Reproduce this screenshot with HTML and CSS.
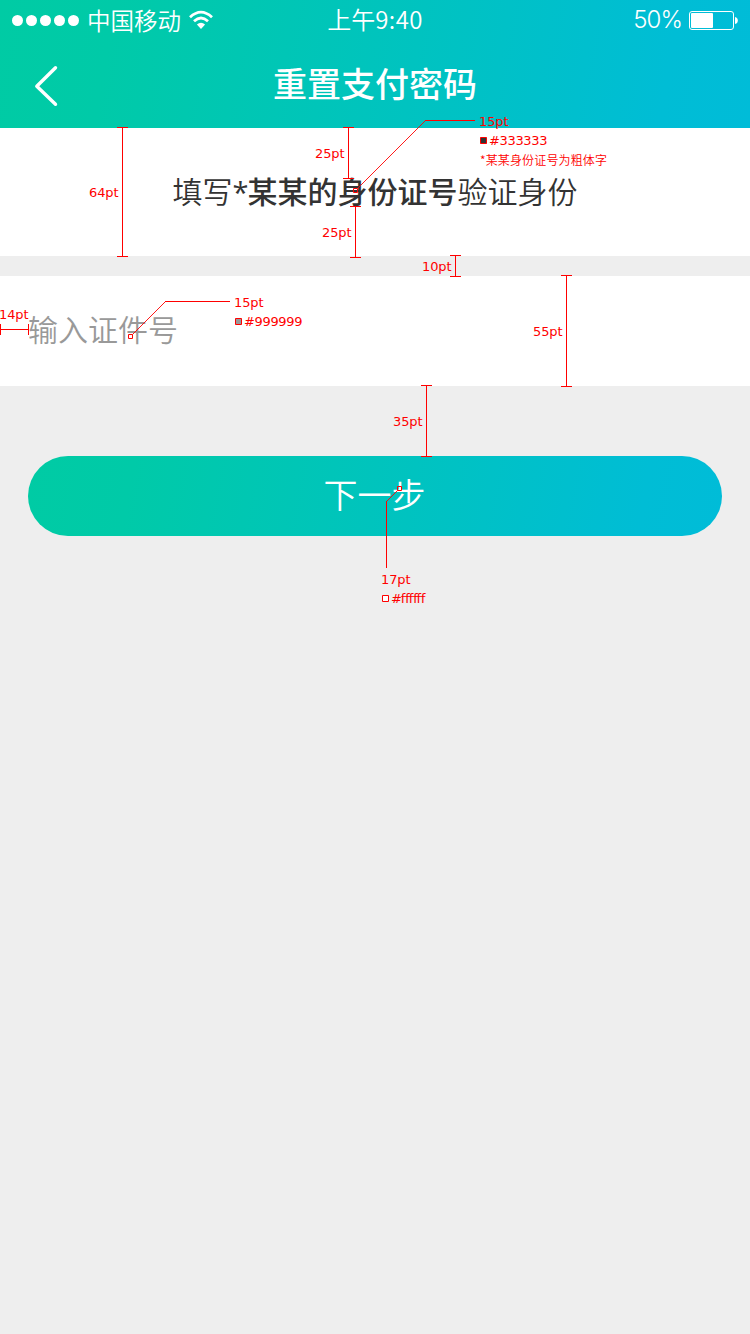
FILE: index.html
```html
<!DOCTYPE html>
<html lang="zh-CN">
<head>
<meta charset="utf-8">
<title>重置支付密码</title>
<link rel="stylesheet" href="styles.css">
</head>
<body>
<main class="screen">
  <header class="header">
    <div class="status">
      <div class="status-left">
        <span class="signal"><i></i><i></i><i></i><i></i><i></i></span>
        <span class="carrier">中国移动</span>
        <svg class="wifi" width="24" height="20" viewBox="0 0 24 20" fill="none" stroke="#fff" stroke-width="2.8">
          <path d="M1 7.2Q12 -3 23 7.2"/>
          <path d="M5 11.2Q12 4.9 19 11.2"/>
          <path d="M7.9 14.4Q12 11 16.1 14.4L12 19Z" fill="#fff" stroke="none"/>
        </svg>
      </div>
      <div class="time">上午<span class="digits">9:40</span></div>
      <div class="status-right">
        <span class="percent">50%</span>
        <svg class="battery" width="49" height="19" viewBox="0 0 49 19">
          <rect x=".5" y=".5" width="44" height="18" rx="2.5" fill="none" stroke="#fff"/>
          <rect x="2" y="2" width="22" height="15" rx="1" fill="#fff"/>
          <path d="M46 6Q48.8 6.5 48.8 9.5T46 13Z" fill="#fff"/>
        </svg>
      </div>
    </div>
    <nav class="nav">
      <svg class="back" width="26" height="42" viewBox="0 0 26 42" fill="none" stroke="#fff" stroke-width="3.4" stroke-linecap="round" stroke-linejoin="round"><path d="M21.5 2.7L2.8 21.3L21.5 39.3"/></svg>
      <h1 class="title">重置支付密码</h1>
    </nav>
  </header>
  <p class="prompt">填写<span class="star">*</span><b>某某的身份证号</b>验证身份</p>
  <div class="field">输入证件号</div>
  <button class="next" type="button">下一步</button>

  <svg class="notes" width="750" height="1334" viewBox="0 0 750 1334">
    <g class="rule">
      <path d="M117 127.5H128M122.5 127V257M117 256.5H128"/>
      <path d="M343 127.5H354M348.5 127V179M343 178.5H354"/>
      <path d="M350 206.5H361M355.5 206V258M350 257.5H361"/>
      <path d="M450 255.5H461M455.5 255V277M450 276.5H461"/>
      <path d="M561 275.5H572M566.5 275V387M561 386.5H572"/>
      <path d="M421 385.5H432M426.5 385V457M421 456.5H432"/>
      <path d="M.5 324V335M0 329.5H29M28.5 324V335"/>
      <path d="M425 120.5H475M165 301.5H230M386.5 501V568"/>
      <path d="M353.5 188.5h4v4h-4zM128.5 334.5h4v4h-4zM397.5 486.5h4v4h-4z"/>
      <path d="M480.5 137.5h6v6h-6z" fill="#333"/>
      <path d="M235.5 318.5h6v6h-6z" fill="#999"/>
      <path d="M382.5 595.5h6v6h-6z" fill="#fff"/>
    </g>
    <path class="leader" d="M358 188L425.5 120.5M132.5 334.5L165.5 301.5M397.5 490.5L386.5 501.5"/>
    <g class="label">
      <text x="89" y="197" textLength="29.5">64pt</text>
      <text x="315" y="158" textLength="29.5">25pt</text>
      <text x="322" y="237" textLength="29.5">25pt</text>
      <text x="422" y="271" textLength="29.5">10pt</text>
      <text x="533" y="336" textLength="29.5">55pt</text>
      <text x="393" y="426" textLength="29.5">35pt</text>
      <text x="-1" y="319" textLength="29.5">14pt</text>
      <text x="479" y="126" textLength="29.5">15pt</text>
      <text x="234" y="307" textLength="29.5">15pt</text>
      <text x="381" y="584" textLength="29.5">17pt</text>
      <text x="489" y="145" textLength="58.5">#333333</text>
      <text x="244" y="326" textLength="58.5">#999999</text>
      <text x="391" y="603" textLength="34.5">#ffffff</text>
      <text class="cjk" x="480" y="165" textLength="127">*某某身份证号为粗体字</text>
    </g>
  </svg>
</main>
</body>
</html>
```
FILE: styles.css
```css
* { box-sizing: border-box; }
body { margin: 0; }
.screen {
  position: relative;
  display: flex;
  flex-direction: column;
  height: 1334px;
  overflow: hidden;
  background: #eee;
  color: #333;
  font-family: "Noto Sans CJK SC", sans-serif;
  font-weight: 350;
}
.header, .next {
  background: linear-gradient(100deg, #00cba4, #00caa8 15%, #00c3c0 55%, #00bdd5 88%, #00bcd8);
  color: #fff;
}
.header { height: 128px; }
.status {
  display: grid;
  grid-template-columns: 1fr auto 1fr;
  height: 40px;
  padding: 0 12px;
  align-items: center;
  line-height: 40px;
}
.status-left, .status-right { display: flex; align-items: center; height: 40px; }
.status-right { justify-content: flex-end; }
.signal { display: flex; gap: 3px; }
.signal i { width: 11px; height: 11px; border-radius: 50%; background: #fff; }
.carrier { margin-left: 8px; font-size: 23.5px; line-height: 38px; }
.wifi { margin-left: 8px; }
.time { font-size: 24px; line-height: 37px; height: 40px; }
.digits { letter-spacing: .4px; }
.percent { font-family: Inter, sans-serif; font-weight: 300; font-size: 24px; letter-spacing: -.9px; line-height: 40px; }
.battery { margin-left: 7px; }
.nav {
  display: grid;
  grid-template-columns: 1fr auto 1fr;
  height: 88px;
  align-items: center;
}
.back { margin-left: 34px; margin-top: 4px; }
.title { margin: 0; font-size: 34px; font-weight: 500; line-height: 85px; height: 88px; }
.prompt {
  height: 128px;
  margin: 0;
  background: #fff;
  font-size: 30px;
  line-height: 124px;
  text-align: center;
}
.prompt b { font-weight: 500; }
.star { display: inline-block; width: 15px; font-family: "Open Sans", sans-serif; font-size: 29px; line-height: 1; font-weight: 400; }
.field {
  height: 110px;
  margin-top: 20px;
  padding-left: 28px;
  background: #fff;
  color: #999;
  font-size: 30px;
  line-height: 104px;
}
.next {
  height: 80px;
  margin: 70px 28px 0;
  padding: 0 1px 5px 0;
  border: 0;
  border-radius: 40px;
  font: 350 34px/75px "Noto Sans CJK SC", sans-serif;
}
.notes { position: absolute; top: 0; left: 0; }
.rule { fill: none; stroke: #f00; stroke-width: 1; }
.leader { fill: none; stroke: #f00; stroke-width: .9; }
.label { fill: #f00; font: 400 13px "DejaVu Sans", sans-serif; }
.cjk { font: 350 12px "Noto Sans CJK SC", sans-serif; }
```
